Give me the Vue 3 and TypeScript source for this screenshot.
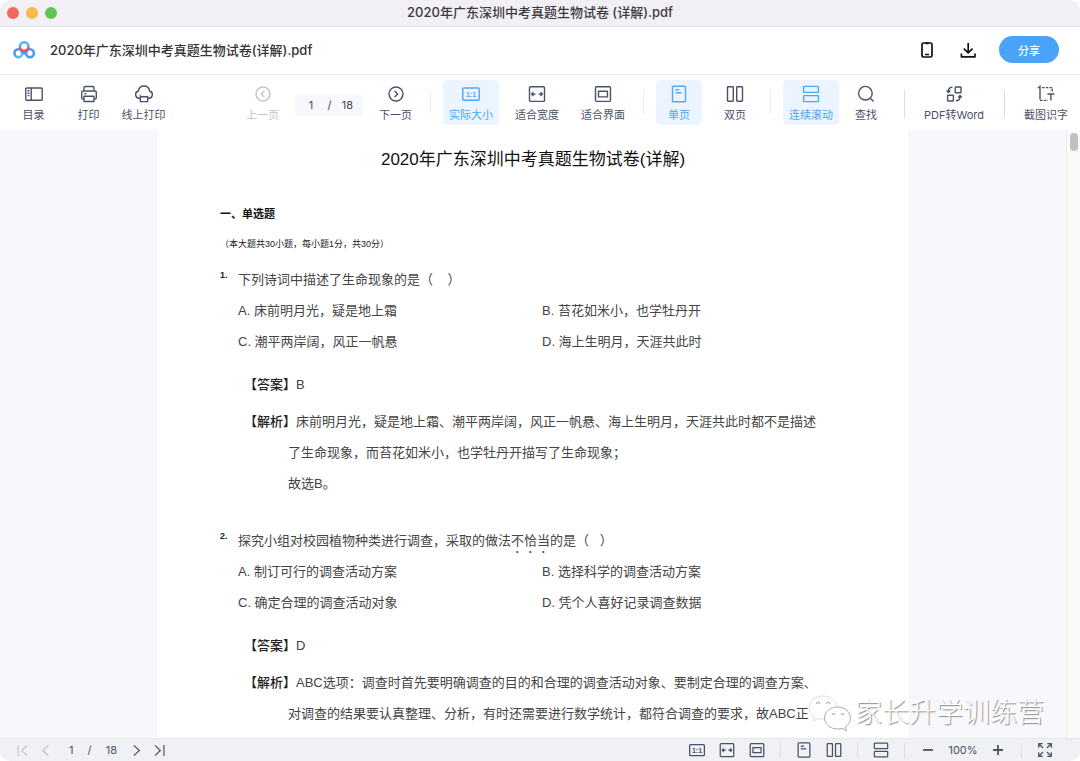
<script setup lang="ts">
import { ref } from 'vue'

interface Tool {
  icon: string
  label: string
  active?: boolean
}

interface Question {
  no: string
  before: string
  emphasis: string
  after: string
  options: string[]
  answer: string
  analysis: string[]
}

const page = ref('1')
const total = 18

const fileTools: Tool[] = [
  { icon: 'outline', label: '目录' },
  { icon: 'printer', label: '打印' },
  { icon: 'cloud', label: '线上打印' },
]
const zoomTools: Tool[] = [
  { icon: 'actual', label: '实际大小', active: true },
  { icon: 'fit-width', label: '适合宽度' },
  { icon: 'fit-page', label: '适合界面' },
]
const layoutTools: Tool[] = [
  { icon: 'single', label: '单页', active: true },
  { icon: 'double', label: '双页' },
]
const viewTools: Tool[] = [
  { icon: 'scroll', label: '连续滚动', active: true },
  { icon: 'search', label: '查找' },
]

const questions: Question[] = [
  {
    no: '1.',
    before: '下列诗词中描述了生命现象的是（\u00a0\u00a0\u00a0\u00a0）',
    emphasis: '',
    after: '',
    options: [
      'A. 床前明月光，疑是地上霜',
      'B. 苔花如米小，也学牡丹开',
      'C. 潮平两岸阔，风正一帆悬',
      'D. 海上生明月，天涯共此时',
    ],
    answer: 'B',
    analysis: [
      '床前明月光，疑是地上霜、潮平两岸阔，风正一帆悬、海上生明月，天涯共此时都不是描述',
      '了生命现象，而苔花如米小，也学牡丹开描写了生命现象；',
      '故选B。',
    ],
  },
  {
    no: '2.',
    before: '探究小组对校园植物种类进行调查，采取的做法',
    emphasis: '不恰当',
    after: '的是（\u00a0\u00a0\u00a0）',
    options: [
      'A. 制订可行的调查活动方案',
      'B. 选择科学的调查活动方案',
      'C. 确定合理的调查活动对象',
      'D. 凭个人喜好记录调查数据',
    ],
    answer: 'D',
    analysis: [
      'ABC选项：调查时首先要明确调查的目的和合理的调查活动对象、要制定合理的调查方案、',
      '对调查的结果要认真整理、分析，有时还需要进行数学统计，都符合调查的要求，故ABC正',
    ],
  },
]
</script>

<template>
  <svg class="defs" aria-hidden="true">
    <symbol id="outline" viewBox="0 0 20 20">
      <rect x="1.8" y="4" width="16.4" height="12.2" rx="1" />
      <path d="M7.2 4v12.2M3.6 6.8h1.8M3.6 9.2h1.8M3.6 11.6h1.8" />
    </symbol>
    <symbol id="printer" viewBox="0 0 20 20">
      <path d="M5 7V3.800q0-1.300 1.300-1.300h7.400q1.300 0 1.300 1.300V7M5 15H4q-1.300 0-1.300-1.300V8.300Q2.700 7 4 7h12q1.300 0 1.300 1.300v5.400q0 1.300-1.300 1.300h-1M5 12.200h10v5.300H5zM5.200 9.600h2.200" />
    </symbol>
    <symbol id="cloud" viewBox="0 0 20 20">
      <path d="M6.300 14.200H5.200a3.500 3.500 0 0 1-.9-6.900C4.800 4.200 7 2 10 2s5.200 2.200 5.700 5.300a3.500 3.500 0 0 1-.9 6.900h-1.100M6.300 12.800h7.400v4.800H6.300zM5.600 11.200h1" />
    </symbol>
    <symbol id="prev" viewBox="0 0 20 20">
      <circle cx="10" cy="10" r="7" />
      <path d="M11.400 6.900 8.300 10l3.100 3.100" />
    </symbol>
    <symbol id="next" viewBox="0 0 20 20">
      <circle cx="10" cy="10" r="7" />
      <path d="M8.600 6.900l3.100 3.100-3.100 3.100" />
    </symbol>
    <symbol id="actual" viewBox="0 0 20 20">
      <rect x="1.8" y="4" width="16.4" height="12.2" rx="1" />
    </symbol>
    <symbol id="fit-width" viewBox="0 0 20 20">
      <rect x="2.500" y="2.800" width="15" height="14.600" rx="1" />
      <path d="M4.800 10.100h3.800M6.500 8.200 4.600 10.100l1.900 1.900M15.200 10.100h-3.800M13.500 8.200l1.900 1.900-1.900 1.900" />
    </symbol>
    <symbol id="fit-page" viewBox="0 0 20 20">
      <rect x="2.5" y="2.8" width="15" height="14.6" rx="1" />
      <rect x="5.5" y="7.3" width="9" height="5.6" />
    </symbol>
    <symbol id="single" viewBox="0 0 20 20">
      <rect x="3.5" y="2.2" width="13" height="15.6" rx="1" />
      <path d="M6.5 5.8h3.6M6.5 8.8h6" />
    </symbol>
    <symbol id="double" viewBox="0 0 20 20">
      <rect x="2.5" y="2.8" width="5.8" height="14.4" rx=".6" />
      <rect x="11.7" y="2.8" width="5.8" height="14.4" rx=".6" />
    </symbol>
    <symbol id="scroll" viewBox="0 0 20 20">
      <rect x="2.6" y="2.4" width="14.8" height="6" rx=".6" />
      <rect x="2.6" y="11.6" width="14.8" height="6" rx=".6" />
    </symbol>
    <symbol id="search" viewBox="0 0 20 20">
      <circle cx="9.4" cy="9.2" r="6.8" />
      <path d="M14.2 14.2l3.4 3.4" />
    </symbol>
    <symbol id="convert" viewBox="0 0 20 20">
      <rect x="11.2" y="3" width="5.8" height="5.8" rx=".6" />
      <rect x="3.6" y="11.2" width="5.8" height="5.8" rx=".6" />
      <path d="M8.400 3.200q-4 0-4 4M2.600 6.600l1.800 1.800 1.800-1.800M12 16.800q4 0 4-4M14.200 13.400l1.800-1.800 1.800 1.800" />
    </symbol>
    <symbol id="capture" viewBox="0 0 20 20">
      <path d="M4 1.2v14.4M1.6 3.6h2.4" />
      <path d="M6 3.6h10.2v5M4 16.4h8" stroke-dasharray="2.6 1.2" />
      <path d="M11.4 10h7M14.9 10v6.6" />
    </symbol>
    <symbol id="phone" viewBox="0 0 20 20">
      <rect x="5" y="3" width="10" height="14" rx="1.6" />
      <path d="M8 14.5h4M8.4 3.4h3.2" />
    </symbol>
    <symbol id="download" viewBox="0 0 20 20">
      <path d="M10.2 3v9.6M5.8 8.6l4.4 4.2 4.4-4.2M3.4 13.4v3.4h13.6v-3.4" />
    </symbol>
    <symbol id="first" viewBox="0 0 20 20">
      <path d="M4.8 3.6v12.8M15.4 4 9 10l6.4 6" />
    </symbol>
    <symbol id="back" viewBox="0 0 20 20"><path d="M13.4 4 6.8 10l6.6 6" /></symbol>
    <symbol id="forward" viewBox="0 0 20 20"><path d="M6.8 4l6.6 6-6.6 6" /></symbol>
    <symbol id="last" viewBox="0 0 20 20">
      <path d="M15.2 3.6v12.8M4.6 4 11 10l-6.4 6" />
    </symbol>
    <symbol id="minus" viewBox="0 0 20 20"><path d="M4.5 10h11" /></symbol>
    <symbol id="plus" viewBox="0 0 20 20"><path d="M4.5 10h11M10 4.5v11" /></symbol>
    <symbol id="full" viewBox="0 0 20 20">
      <path d="M3 7.4V3h4.4M3.4 3.4l4.4 4.4M12.6 3H17v4.4M16.6 3.4l-4.4 4.4M3 12.6V17h4.4M3.4 16.6l4.4-4.4M17 12.6V17h-4.4M16.6 16.6l-4.4-4.4" />
    </symbol>
  </svg>

  <div class="window">
    <div class="titlebar">
      <div class="lights"><i class="red"></i><i class="yellow"></i><i class="green"></i></div>
      <span>2020年广东深圳中考真题生物试卷 (详解).pdf</span>
    </div>

    <header class="header">
      <svg class="logo" viewBox="0 0 24 20" aria-hidden="true">
        <defs>
          <linearGradient id="ringTop" x1="0" y1="0" x2="0" y2="1">
            <stop offset=".4" stop-color="#4cb4fb" />
            <stop offset=".65" stop-color="#f0506c" />
          </linearGradient>
          <linearGradient id="ringLeft" x1="0" y1="0" x2="1" y2="1">
            <stop offset="0" stop-color="#3d8ff5" />
            <stop offset="1" stop-color="#5cc8fc" />
          </linearGradient>
        </defs>
        <circle cx="6.400" cy="13.200" r="3.900" stroke="url(#ringLeft)" />
        <circle cx="18" cy="13.200" r="3.900" stroke="#459cf6" />
        <path d="M8.800 10.400 12.200 13.400l3.400-3" stroke="#459cf6" />
        <circle cx="12.200" cy="6.600" r="4.300" stroke="url(#ringTop)" />
      </svg>
      <h1 class="name">2020年广东深圳中考真题生物试卷(详解).pdf</h1>
      <button class="plain" aria-label="手机查看"><svg><use href="#phone" /></svg></button>
      <button class="plain" aria-label="下载"><svg><use href="#download" /></svg></button>
      <button class="share">分享</button>
    </header>

    <nav class="toolbar">
      <div class="files">
        <button v-for="t in fileTools" :key="t.icon" class="tool">
          <svg><use :href="'#' + t.icon" /></svg>{{ t.label }}
        </button>
      </div>
      <div class="group">
        <button class="tool mid" disabled><svg><use href="#prev" /></svg>上一页</button>
        <label class="pager">
          <input v-model="page" aria-label="页码" /><span>/</span><span>{{ total }}</span>
        </label>
        <button class="tool mid"><svg><use href="#next" /></svg>下一页</button>
      </div>
      <i class="rule"></i>
      <div class="group">
        <button v-for="t in zoomTools" :key="t.icon" class="tool mid" :class="{ active: t.active }">
          <svg>
            <use :href="'#' + t.icon" />
            <text v-if="t.icon === 'actual'" x="10" y="13" text-anchor="middle">1:1</text>
          </svg>{{ t.label }}
        </button>
      </div>
      <i class="rule"></i>
      <div class="group">
        <button v-for="t in layoutTools" :key="t.icon" class="tool wide" :class="{ active: t.active }">
          <svg><use :href="'#' + t.icon" /></svg>{{ t.label }}
        </button>
      </div>
      <i class="rule"></i>
      <div class="group tight">
        <button v-for="t in viewTools" :key="t.icon" class="tool mid" :class="{ active: t.active }">
          <svg><use :href="'#' + t.icon" /></svg>{{ t.label }}
        </button>
      </div>
      <div class="extras">
        <button class="tool"><svg><use href="#convert" /></svg>PDF转Word</button>
        <button class="tool"><svg><use href="#capture" /></svg>截图识字</button>
      </div>
    </nav>

    <div class="viewer">
      <main class="canvas">
        <article class="paper">
          <h2>2020年广东深圳中考真题生物试卷(详解)</h2>
          <h3>一、单选题</h3>
          <p class="note">（本大题共30小题，每小题1分，共30分）</p>
          <section v-for="q in questions" :key="q.no" class="question">
            <b class="no">{{ q.no }}</b>
            <div class="content">
              <p>{{ q.before }}<em v-if="q.emphasis">{{ q.emphasis }}</em>{{ q.after }}</p>
              <div class="options">
                <span v-for="o in q.options" :key="o">{{ o }}</span>
              </div>
              <div class="block answer"><strong>【答案】</strong>{{ q.answer }}</div>
              <div class="block">
                <strong>【解析】</strong><template v-for="(line, i) in q.analysis" :key="i"><br v-if="i" />{{ line }}</template>
              </div>
            </div>
          </section>
        </article>
      </main>
      <div class="track"><div class="thumb"></div></div>
      <div class="watermark">
        <svg viewBox="0 0 44 38" aria-hidden="true">
          <path d="M16 2C8 2 2 7 2 13.500c0 3.800 2 7 5.300 9.200L6 27l5-2.600c1.600.4 3.300.6 5 .6 8 0 14-5 14-11.500S24 2 16 2z" />
          <path class="front" d="M30.500 13C23 13 17.500 18 17.500 24s5.500 11 13 11c1.600 0 3.200-.3 4.600-.7l4.400 2.500-1.200-3.900C41.500 30.900 43.500 27.700 43.500 24c0-6-5.500-11-13-11z" />
          <g class="eyes"><path d="M9.500 10a1.700 1.700 0 0 1 3.400 0M19.500 10a1.700 1.700 0 0 1 3.400 0M25 21a1.500 1.500 0 0 1 3 0M34 21a1.500 1.500 0 0 1 3 0" /></g>
        </svg>
        <span>家长升学训练营</span>
      </div>
    </div>

    <footer class="status">
      <div class="pages">
        <button disabled aria-label="第一页"><svg><use href="#first" /></svg></button>
        <button disabled aria-label="上一页"><svg><use href="#back" /></svg></button>
        <span class="count"><span>{{ page }}</span><span>/</span><span>{{ total }}</span></span>
        <button aria-label="下一页"><svg><use href="#forward" /></svg></button>
        <button aria-label="最后一页"><svg><use href="#last" /></svg></button>
      </div>
      <div class="views">
        <button aria-label="实际大小">
          <svg><use href="#actual" /><text x="9" y="12" text-anchor="middle">1:1</text></svg>
        </button>
        <button aria-label="适合宽度"><svg><use href="#fit-width" /></svg></button>
        <button aria-label="适合界面"><svg><use href="#fit-page" /></svg></button>
        <i></i>
        <button aria-label="单页"><svg><use href="#single" /></svg></button>
        <button aria-label="双页"><svg><use href="#double" /></svg></button>
        <i></i>
        <button aria-label="连续滚动"><svg><use href="#scroll" /></svg></button>
        <i></i>
        <button aria-label="缩小"><svg class="bold"><use href="#minus" /></svg></button>
        <span class="scale">100%</span>
        <button aria-label="放大"><svg class="bold"><use href="#plus" /></svg></button>
        <i></i>
        <button aria-label="全屏"><svg><use href="#full" /></svg></button>
      </div>
    </footer>
  </div>
</template>

<style>
body {
  margin: 0;
  background: #fff;
}
</style>

<style scoped>
* {
  box-sizing: border-box;
}
.defs {
  position: absolute;
  width: 0;
  height: 0;
}
svg text {
  font: 700 7px "Liberation Sans", sans-serif;
  fill: currentColor;
  stroke: none;
}
button {
  border: 0;
  padding: 0;
  background: none;
  color: inherit;
  font: inherit;
}
svg {
  fill: none;
  stroke: currentColor;
  stroke-width: 1.4;
  stroke-linejoin: round;
  display: block;
}
.window {
  height: 100vh;
  display: flex;
  flex-direction: column;
  overflow: hidden;
  border-radius: 10px;
  background: #fff;
  color: #4a5266;
  font-family: Inter, "Noto Sans CJK SC", sans-serif;
  font-size: 11px;
}
.titlebar {
  flex: none;
  position: relative;
  height: 27px;
  display: flex;
  align-items: center;
  justify-content: center;
  padding-bottom: 2px;
  background: #f2f0f5;
  border-bottom: 1px solid #e2e0e5;
  color: #3c3b40;
  font: 500 13px/20px Inter, "Noto Sans CJK SC", sans-serif;
}
.lights {
  position: absolute;
  left: 7px;
  top: 7px;
  display: flex;
  gap: 7px;
}
.lights i {
  width: 12px;
  height: 12px;
  border-radius: 50%;
}
.red { background: #ec6a5e; }
.yellow { background: #f4be4f; }
.green { background: #61c554; }
.header {
  flex: none;
  height: 48px;
  display: flex;
  align-items: center;
  padding: 0 21px 2px 12px;
  border-bottom: 1px solid #ececef;
}
.logo {
  width: 24px;
  height: 20px;
  stroke-width: 2.6;
}
.name {
  flex: 1;
  margin: 0 0 0 14px;
  color: #333;
  font-size: 13px;
  font-weight: 500;
}
.plain {
  margin-right: 21px;
  color: #111;
}
.plain svg {
  width: 20px;
  height: 20px;
  stroke-width: 1.7;
}
.share {
  width: 60px;
  height: 27px;
  border-radius: 14px;
  background: #4aa3f8;
  color: #fff;
  font-weight: 500;
}
.toolbar {
  flex: none;
  height: 55px;
  display: flex;
  align-items: center;
  padding: 0 12px 0 6px;
  white-space: nowrap;
}
.files {
  display: grid;
  grid-template-columns: repeat(3, 55px);
  margin-right: 69px;
}
.group {
  display: flex;
  align-items: center;
  gap: 10px;
}
.tight {
  gap: 4px;
}
.tool {
  height: 45px;
  display: flex;
  flex-direction: column;
  align-items: center;
  gap: 2px;
  padding-top: 4px;
  border-radius: 5px;
  line-height: 18px;
}
.tool svg {
  width: 20px;
  height: 20px;
}
.mid {
  padding-left: 6px;
  padding-right: 6px;
}
.wide {
  padding-left: 12px;
  padding-right: 12px;
}
.tight .tool:last-child {
  padding-left: 12px;
  padding-right: 12px;
}
.tool:disabled,
.pages button:disabled {
  color: #c3c4c9;
}
.active {
  background: #ebf4ff;
  color: #4ca6fa;
}
.pager {
  width: 68px;
  height: 22px;
  display: flex;
  align-items: center;
  justify-content: space-between;
  margin-top: 4px;
  padding: 0 10px;
  border-radius: 3px;
  background: #f7f8fc;
  color: #444;
}
.pager input {
  width: 12px;
  padding: 0;
  border: 0;
  background: none;
  color: inherit;
  font: inherit;
  text-align: center;
}
.rule {
  width: 1px;
  height: 23px;
  margin: 0 12px;
  background: #ececf0;
}
.extras {
  display: flex;
  margin-left: auto;
}
.extras .tool {
  position: relative;
  border-radius: 0;
}
.extras .tool + .tool {
  margin-left: 40px;
}
.extras .tool::before {
  content: "";
  position: absolute;
  left: -20px;
  top: 10px;
  width: 1px;
  height: 28px;
  background: #dcdde2;
}
.viewer {
  position: relative;
  flex: 1;
  min-height: 0;
  display: flex;
  background: #f7f8fc;
}
.canvas {
  flex: 1;
  overflow: hidden;
}
.paper {
  max-width: 752px;
  min-height: 100%;
  margin: 0 auto;
  padding: 15px 63px 0;
  background: #fff;
  box-shadow: 0 0 2px #e6e8ee;
  color: #444;
  font-family: "Liberation Sans", "Noto Sans CJK SC", sans-serif;
  font-size: 13px;
  line-height: 31px;
}
h2 {
  margin: 0 0 29px;
  color: #111;
  font-size: 17px;
  font-weight: 400;
  line-height: 30px;
  text-align: center;
}
h3 {
  margin: 0 0 10px;
  color: #111;
  font-size: 11px;
  line-height: 20px;
}
.note {
  margin: 0 0 10px;
  color: #222;
  font-size: 9px;
  line-height: 20px;
}
.question {
  display: flex;
  margin-bottom: 26px;
}
.no {
  flex: none;
  width: 18px;
  color: #222;
  font-size: 9px;
  line-height: 22px;
}
.content {
  flex: 1;
}
.content p {
  height: 31px;
  margin: 0;
}
.content em {
  font-style: normal;
  text-emphasis: filled dot;
  text-emphasis-position: under right;
}
.options {
  display: grid;
  grid-template-columns: 1fr 1fr;
}
.block {
  padding-left: 50px;
  white-space: nowrap;
}
.block strong {
  margin-left: -44px;
  color: #222;
  font-weight: 500;
}
.answer {
  margin: 12px 0 6px;
}
.track {
  width: 14px;
  padding: 3px 2px;
  border-left: 1px solid #ebebee;
  background: #fafafa;
}
.thumb {
  width: 8px;
  height: 18px;
  margin: 0 auto;
  border-radius: 4px;
  background: #c1c1c3;
}
.watermark {
  position: absolute;
  right: 36px;
  bottom: 6px;
  display: flex;
  align-items: center;
  gap: 4px;
  color: #fff;
  font-size: 27px;
  font-weight: 300;
  line-height: 38px;
  text-shadow: 1px 1px 1px #888;
}
.watermark svg {
  width: 44px;
  height: 38px;
  fill: #fff;
  fill-opacity: 0.85;
  stroke: #d4d4d4;
  stroke-width: 0.8;
}
.watermark .front {
  stroke: #999;
}
.eyes {
  fill: none;
  stroke: #888;
}
.status {
  flex: none;
  height: 23px;
  display: flex;
  align-items: center;
  justify-content: space-between;
  padding: 0 20px 0 11px;
  border-top: 1px solid #e6e7eb;
  background: #f0f1f5;
}
.pages,
.views {
  display: flex;
  align-items: center;
}
.pages button {
  width: 23px;
}
.views button {
  width: 30px;
}
.status svg {
  width: 18px;
  height: 18px;
  margin: 0 auto;
}
.pages svg {
  width: 17px;
  height: 17px;
}
.status .bold {
  stroke-width: 2;
}
.count {
  width: 48px;
  display: flex;
  justify-content: space-between;
  margin: 0 8px 0 12px;
}
.views i {
  width: 1px;
  height: 15px;
  margin: 0 8px;
  background: #dcdde2;
}
.scale {
  width: 40px;
  text-align: center;
}
</style>
